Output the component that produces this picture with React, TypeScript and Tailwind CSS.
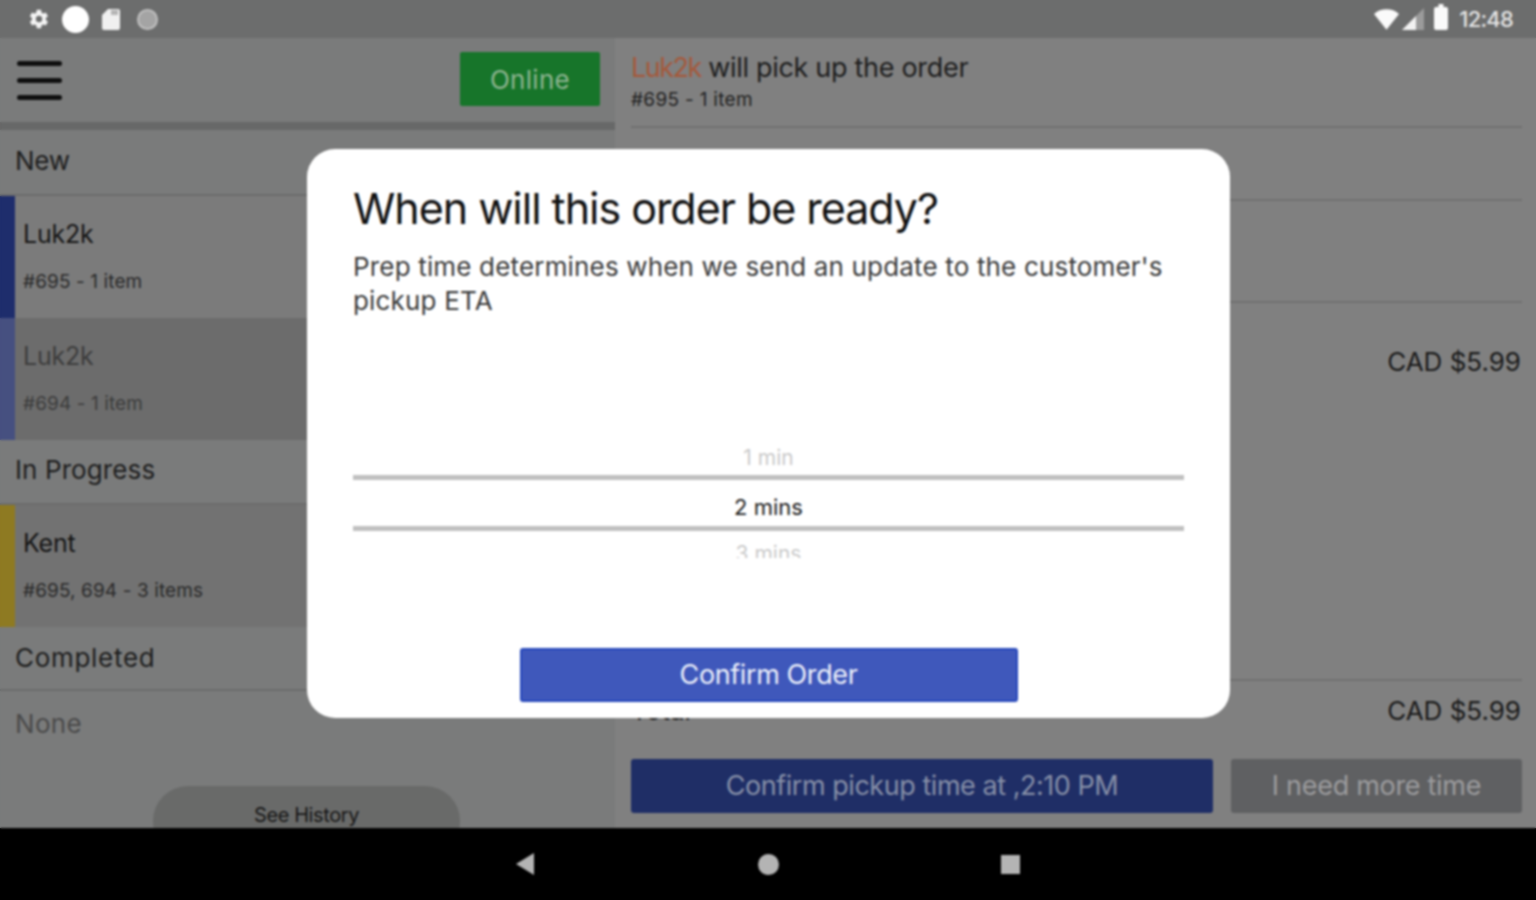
import React from 'react';

const font = "font-['Inter','Liberation_Sans',sans-serif]";

function StatusBar() {
  return (
    <div className="flex h-[38px] items-center justify-between bg-[#6c6d6d] pl-[28px] pr-[23px]">
      <div className="flex items-center gap-[14px]">
        <svg width="22" height="22" viewBox="0 0 24 24" fill="#f4f4f4">
          <path d="M19.4 13c.1-.3.1-.7.1-1s0-.7-.1-1l2.1-1.6c.2-.2.2-.4.1-.6l-2-3.5c-.1-.2-.4-.3-.6-.2l-2.5 1c-.5-.4-1.100-.7-1.700-1L14.400 2.400c0-.2-.2-.4-.5-.4h-4c-.2 0-.4.2-.5.4L9 5.100c-.6.3-1.200.6-1.700 1l-2.500-1c-.2-.1-.5 0-.6.2l-2 3.500c-.1.2-.1.4.1.6L4.400 11c0 .3-.1.700-.1 1s0 .7.1 1l-2.100 1.600c-.2.2-.2.4-.1.6l2 3.500c.1.2.4.3.6.2l2.500-1c.5.4 1.100.7 1.700 1l.4 2.700c0 .2.2.4.5.4h4c.2 0 .4-.2.5-.4l.4-2.700c.6-.3 1.200-.6 1.700-1l2.500 1c.2.1.5 0 .6-.2l2-3.500c.1-.2.1-.4-.1-.6L19.400 13zM12 15.500a3.500 3.500 0 1 1 0-7 3.500 3.500 0 0 1 0 7z" />
        </svg>
        <div className="-ml-[2px] h-[27px] w-[27px] rounded-full bg-white" />
        <svg className="-ml-[2px]" width="20" height="24" viewBox="0 0 20 24" fill="#f0f0f0">
          <path d="M7 2h10a2 2 0 0 1 2 2v17a2 2 0 0 1-2 2H3a2 2 0 0 1-2-2V8z" />
          <rect x="10" y="3" width="7" height="5" fill="#b5b5b5" />
        </svg>
        <div className="ml-[2px] h-[21px] w-[21px] rounded-full border-[2px] border-[#c0c0c0] bg-[#a4a4a4]" />
      </div>
      <div className="flex items-center">
        <svg width="25" height="21" viewBox="0 0 27 22" fill="#fafafa">
          <path d="M0 5C4 1.500 8.500 0 13.500 0S23 1.500 27 5L13.500 22z" />
        </svg>
        <svg className="ml-[3px]" width="22" height="22" viewBox="0 0 22 22">
          <path d="M22 0v22H0z" fill="#9b9b9b" />
          <path d="M14 8v14H0z" fill="#f2f2f2" />
        </svg>
        <svg className="ml-[10px] -mt-[4px]" width="14" height="26" viewBox="0 0 14 26" fill="#fafafa">
          <path d="M4.500 0h5v3H12a2 2 0 0 1 2 2v19a2 2 0 0 1-2 2H2a2 2 0 0 1-2-2V5a2 2 0 0 1 2-2h2.500z" />
        </svg>
        <span className="ml-[11px] text-[22px] font-medium tracking-[-0.8px] text-[#e4e4e4]">12:48</span>
      </div>
    </div>
  );
}

function SectionHeading({ label, className }: { label: string; className: string }) {
  return (
    <div className={`flex shrink-0 items-center border-b-2 border-[#6b6c6c] pl-[15px] text-[26px] text-[#1d1d1d] ${className}`}>
      {label}
    </div>
  );
}

function OrderRow({ name, detail, bar, bg, muted }: { name: string; detail: string; bar: string; bg: string; muted?: boolean }) {
  return (
    <div className={`flex h-[122px] shrink-0 ${bg}`}>
      <div className={`w-[15px] ${bar}`} />
      <div className="pl-[8px]">
        <div className={`mt-[20px] text-[25px] leading-[36px] tracking-[-0.2px] ${muted ? 'text-[#3c3c3c]' : 'text-[#151515]'}`}>{name}</div>
        <div className={`mt-[17px] text-[19px] leading-[26px] tracking-[0.1px] ${muted ? 'text-[#3c3c3c]' : 'text-[#2a2a2a]'}`}>{detail}</div>
      </div>
    </div>
  );
}

function LeftPanel() {
  return (
    <div className="flex w-[615px] shrink-0 flex-col bg-[#7a7b7b]">
      <div className="flex h-[84px] shrink-0 items-center justify-between pl-[17px] pr-[15px]">
        <div className="flex w-[45px] flex-col gap-[12px]">
          <div className="h-[5px] rounded-full bg-[#0f0f0f]" />
          <div className="h-[5px] rounded-full bg-[#0f0f0f]" />
          <div className="h-[5px] rounded-full bg-[#0f0f0f]" />
        </div>
        <div className="-mt-[2px] flex h-[54px] w-[140px] items-center justify-center rounded-[2px] bg-[#17752a] text-[26px] tracking-[0.3px] text-[#8fb592]">
          Online
        </div>
      </div>
      <div className="h-[8px] shrink-0 bg-[#676868]" />
      <SectionHeading label="New" className="h-[66px] pb-[4px] tracking-[-0.3px]" />
      <OrderRow name="Luk2k" detail="#695 - 1 item" bar="bg-[#1e2d6c]" bg="bg-[#7b7b7b]" />
      <OrderRow name="Luk2k" detail="#694 - 1 item" bar="bg-[#465080]" bg="bg-[#6c6c6c]" muted />
      <SectionHeading label="In Progress" className="h-[65px] pb-[4px] tracking-[0.1px]" />
      <OrderRow name="Kent" detail="#695, 694 - 3 items" bar="bg-[#8e7a22]" bg="bg-[#727272]" />
      <SectionHeading label="Completed" className="h-[64px] pb-[2px] tracking-[0.7px]" />
      <div className="flex h-[66px] shrink-0 items-center pb-[2px] pl-[15px] text-[26px] tracking-[0.3px] text-[#4a4a4a]">None</div>
      <div className="flex flex-1 items-start justify-center overflow-hidden pt-[29px]">
        <div className="-ml-[2px] flex h-[70px] w-[307px] justify-center rounded-[36px] bg-[#696a69] pt-[16px] text-[20px] leading-[26px] tracking-[-0.4px] text-[#161616]">
          See History
        </div>
      </div>
    </div>
  );
}

function RightPanel() {
  return (
    <div className="flex flex-1 flex-col bg-[#808080] pl-[16px] pr-[14px]">
      <div className="h-[90px] shrink-0 border-b-2 border-[#707070] pt-[11px]">
        <div className="text-[27px] leading-[37px] tracking-[-0.3px] text-[#1d1d1d]">
          <span className="tracking-[-1.5px] text-[#a5583a]">Luk2k</span> will pick up the order
        </div>
        <div className="mt-[1px] text-[19px] leading-[26px] tracking-[0.3px] text-[#222]">#695 - 1 item</div>
      </div>
      <div className="h-[73px] shrink-0 border-b-2 border-[#707070]" />
      <div className="h-[102px] shrink-0 border-b-2 border-[#707070]" />
      <div className="flex h-[378px] shrink-0 justify-end border-b-2 border-[#707070] pr-[1px] pt-[42px] text-[26px] leading-[34px] tracking-[0px] text-[#1a1a1a]">
        CAD $5.99
      </div>
      <div className="flex h-[78px] shrink-0 items-start justify-between pr-[1px] pt-[13px] text-[26px] leading-[34px] tracking-[0px] text-[#1a1a1a]">
        <span>Total</span>
        <span>CAD $5.99</span>
      </div>
      <div className="flex gap-[18px]">
        <div className="flex h-[54px] w-[582px] items-center justify-center rounded-[3px] bg-[#1f2e66] text-[27px] tracking-[-0.46px] text-[#8790a8]">
          Confirm pickup time at ,2:10 PM
        </div>
        <div className="flex h-[54px] flex-1 items-center justify-center rounded-[3px] bg-[#5f6062] text-[27px] tracking-[-0.3px] text-[#9c9c9e]">
          I need more time
        </div>
      </div>
    </div>
  );
}

function PrepTimeDialog() {
  return (
    <div className="absolute left-[307px] top-[149px] flex h-[569px] w-[923px] flex-col rounded-[28px] bg-white px-[46px]">
      <h1 className="mt-[32px] text-[43px] leading-[54px] tracking-[-1.03px] text-[#111]">When will this order be ready?</h1>
      <p className="mt-[15px] text-[26px] leading-[34px] tracking-[0.17px] text-[#3a3a3a]">
        Prep time determines when we send an update to the customer's pickup ETA
      </p>
      <div className="mt-[127px] flex h-[113px] flex-col items-center overflow-hidden">
        <div className="h-[30px] shrink-0 text-[21px] leading-[26px] text-[#c9c9c9]">1 min</div>
        <div className="h-[5px] w-full shrink-0 bg-[#c0c0c0]" />
        <div className="flex h-[46px] shrink-0 items-center pt-[8px] text-[22px] text-[#1a1a1a]">2 mins</div>
        <div className="h-[5px] w-full shrink-0 bg-[#c0c0c0]" />
        <div className="mt-[10px] shrink-0 text-[21px] leading-[26px] text-[#c9c9c9]">3 mins</div>
      </div>
      <div className="mt-[90px] flex justify-center">
        <div className="flex h-[54px] w-[498px] items-center justify-center rounded-[3px] border-2 border-[#2547bb] bg-[#3f58bb] text-[27px] tracking-[-0.4px] text-[#eef1fb]">
          Confirm Order
        </div>
      </div>
    </div>
  );
}

function NavBar() {
  return (
    <div className="flex h-[72px] shrink-0 items-center justify-center gap-[222px] bg-black">
      <svg width="20" height="22" viewBox="0 0 20 22" fill="#b4b4b4"><path d="M18 0v22L0 11z" /></svg>
      <div className="h-[21px] w-[21px] rounded-full bg-[#b4b4b4]" />
      <div className="h-[19px] w-[19px] bg-[#b4b4b4]" />
    </div>
  );
}

export default function App() {
  return (
    <div className={`relative flex h-[900px] w-[1536px] flex-col overflow-hidden ${font}`}>
      <StatusBar />
      <div className="flex h-[790px] shrink-0 overflow-hidden">
        <LeftPanel />
        <RightPanel />
      </div>
      <NavBar />
      <PrepTimeDialog />
      {/* the screenshot is a soft upscale, this keeps the edges from going white */}
      <div className="pointer-events-none absolute inset-0 backdrop-blur-[0.8px]" />
    </div>
  );
}
